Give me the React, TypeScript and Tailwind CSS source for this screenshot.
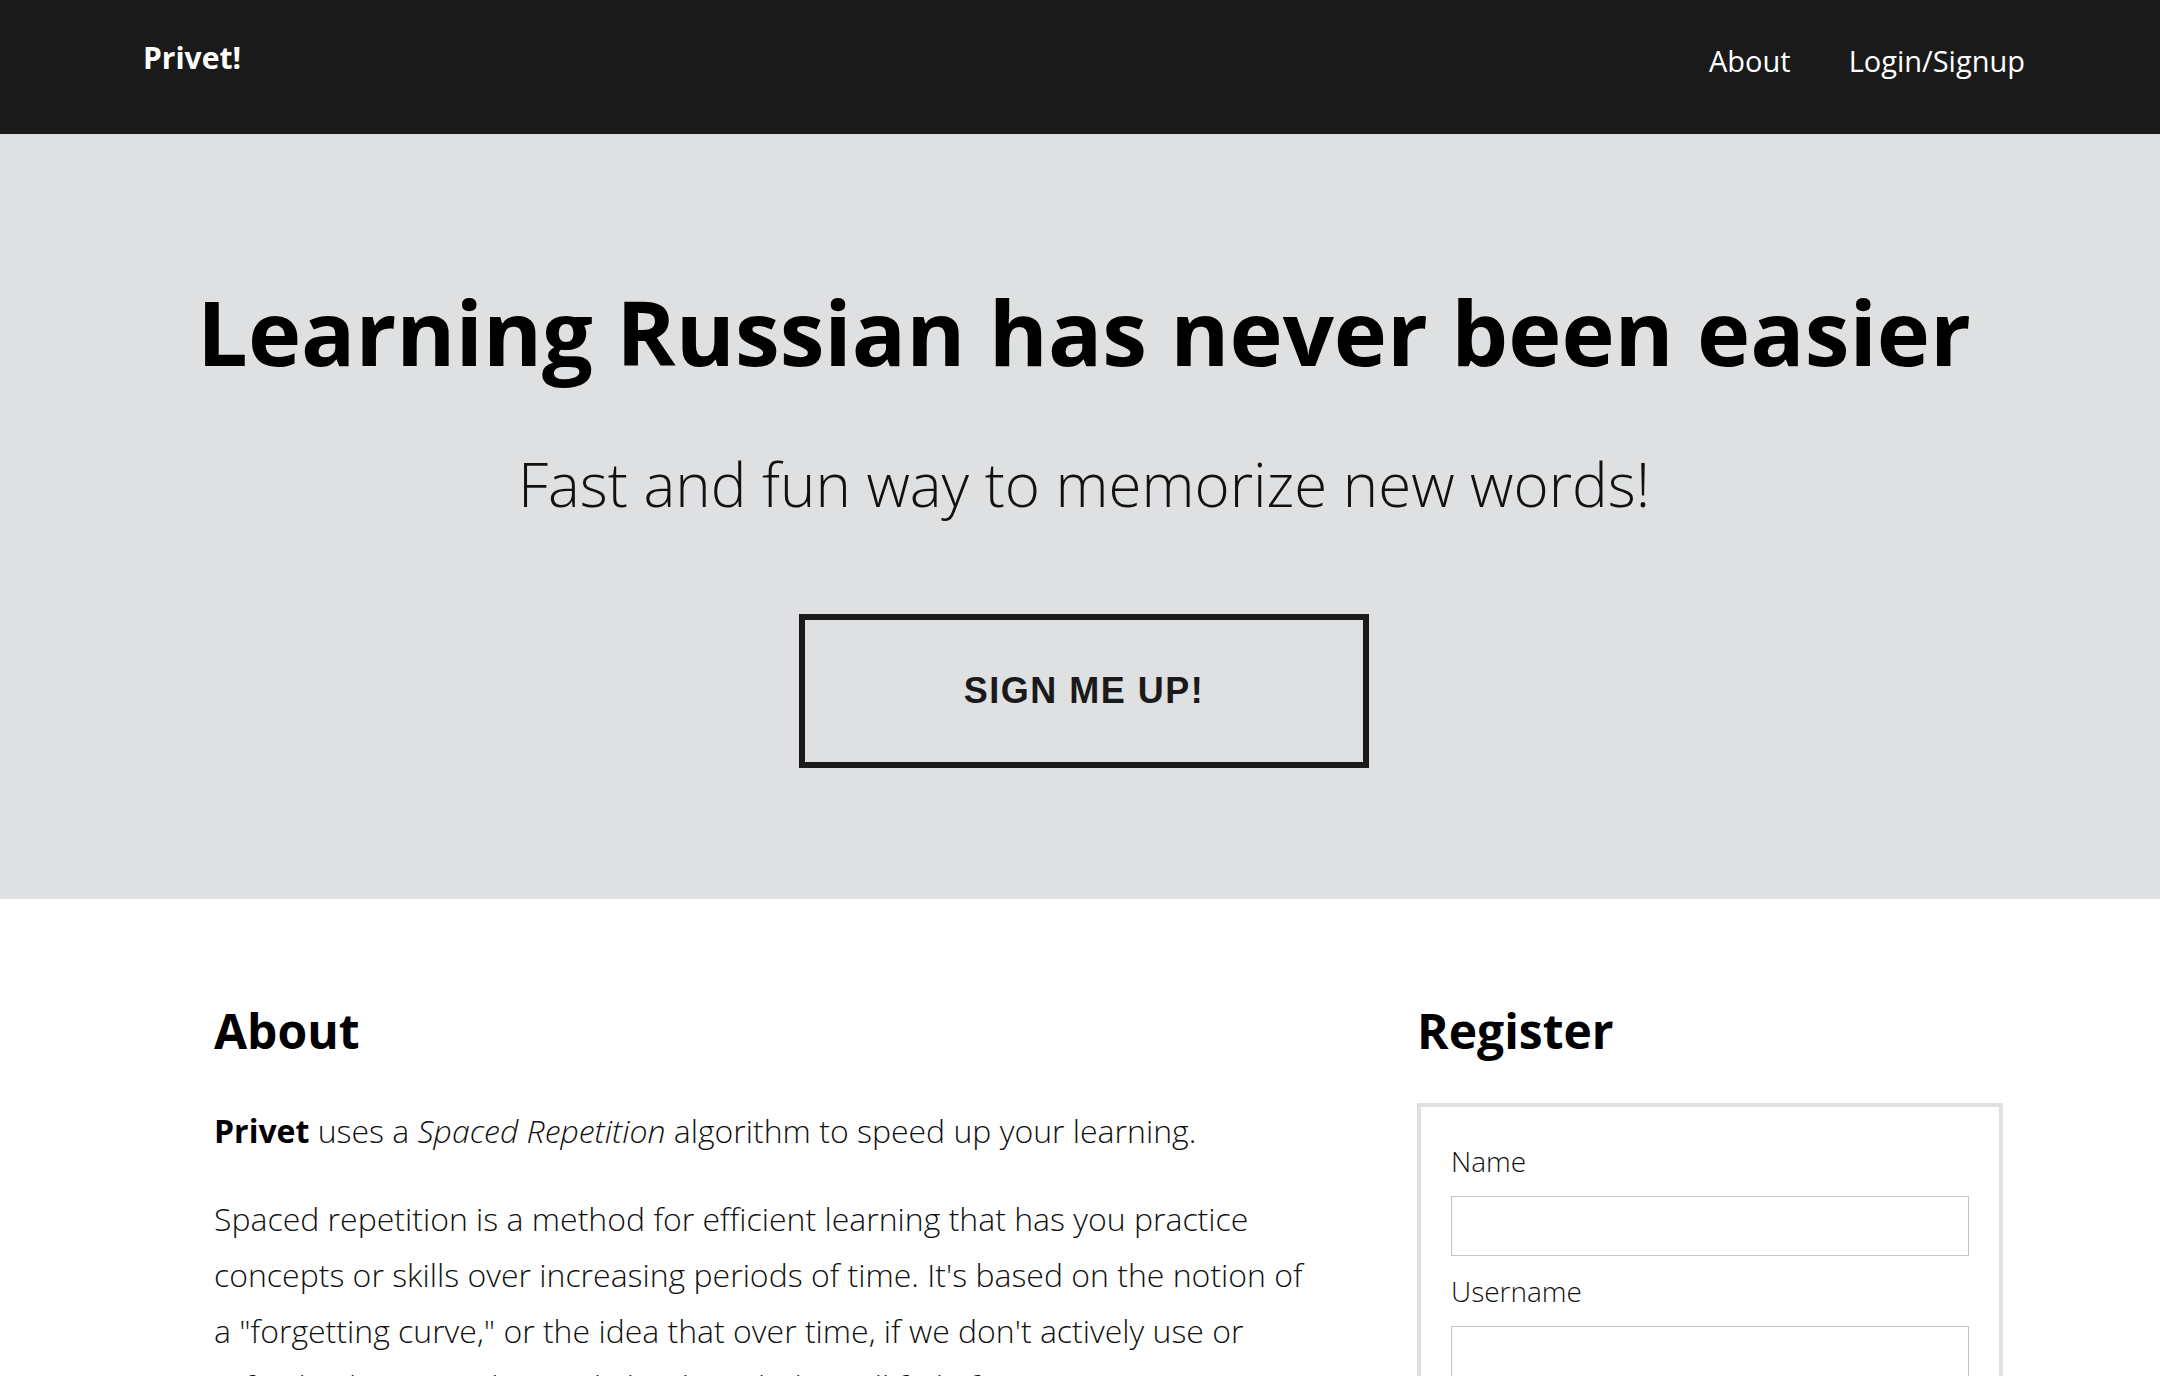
import React from "react";

export default function App() {
  return (
    <div className="min-h-[1376px] bg-white text-black" style={{ fontFamily: '"Open Sans", "Liberation Sans", sans-serif' }}>
      <nav className="h-[134px] bg-[#1a1a1a] flex items-start justify-between pl-[143px] pr-[135px]">
        <div className="pt-[43px] text-[30px] leading-none font-bold text-white">Privet!</div>
        <div className="pt-[46px] flex gap-[58px] text-[29px] leading-none font-normal text-white">
          <a>About</a>
          <a>Login/Signup</a>
        </div>
      </nav>

      <section className="bg-[#dfe0e2] pt-[152px] pb-[131px] pl-[8px] flex flex-col items-center">
        <h1 className="text-[90px] leading-none font-bold text-black">
          Learning Russian has never been easier
        </h1>
        <p className="mt-[78px] text-[60px] leading-none font-light text-[#111]">
          Fast and fun way to memorize new words!
        </p>
        <button
          className="mt-[100px] w-[570px] h-[154px] border-[6px] border-[#1a1a1a] flex items-center justify-center text-[36px] font-bold tracking-[1.5px] text-[#1a1a1a]"
          style={{ fontFamily: '"Liberation Sans", Arial, sans-serif' }}
        >
          SIGN ME UP!
        </button>
      </section>

      <section className="flex pt-[108px] pl-[214px]">
        <div className="w-[1100px]">
          <h2 className="text-[48px] leading-none font-bold text-black">About</h2>
          <p className="mt-[48px] text-[32px] leading-[56px] font-light text-[#111]">
            <b className="font-bold text-black">Privet</b> uses a <i>Spaced Repetition</i> algorithm to speed up your learning.
          </p>
          <p className="mt-[32px] text-[32px] leading-[56px] font-light text-[#111]">
            Spaced repetition is a method for efficient learning that has you practice concepts or skills over increasing periods of time. It's based on the notion of a "forgetting curve," or the idea that over time, if we don't actively use or refresh what we've learned, that knowledge will fade from our memory.
          </p>
        </div>
        <div className="ml-[103px] w-[586px]">
          <h2 className="text-[48px] leading-none font-bold text-black">Register</h2>
          <div className="mt-[48px] border-[4px] border-[#dfe0e2] px-[30px] pt-[36px] pb-[30px]">
            <label className="block text-[28px] leading-[36px] font-light text-[#111]">Name</label>
            <input className="mt-[17px] block w-full h-[60px] border border-[#c4c4c4] bg-white" />
            <label className="mt-[17px] block text-[28px] leading-[36px] font-light text-[#111]">Username</label>
            <input className="mt-[17px] block w-full h-[60px] border border-[#c4c4c4] bg-white" />
            <label className="mt-[17px] block text-[28px] leading-[36px] font-light text-[#111]">Password</label>
            <input type="password" className="mt-[17px] block w-full h-[60px] border border-[#c4c4c4] bg-white" />
          </div>
        </div>
      </section>
    </div>
  );
}
